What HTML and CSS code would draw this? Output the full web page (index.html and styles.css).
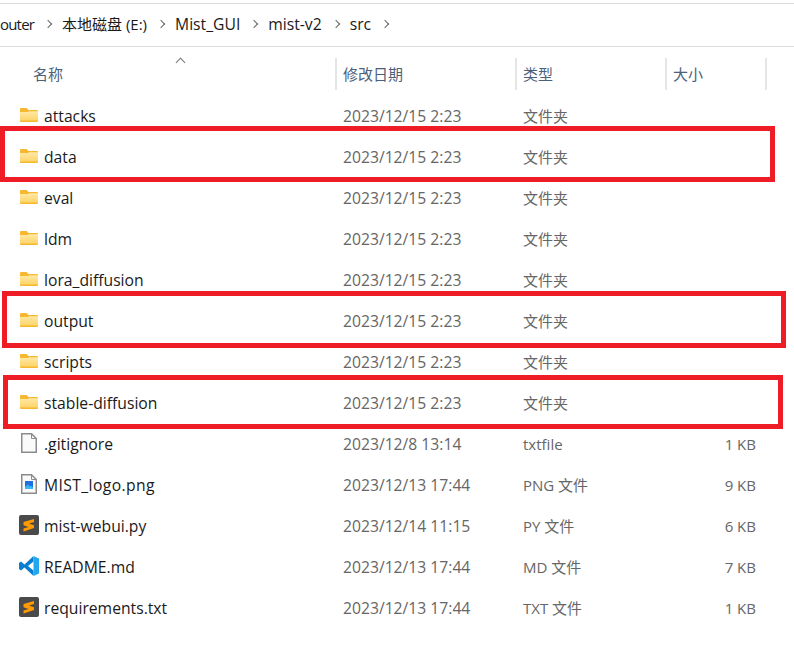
FILE: index.html
```html
<!DOCTYPE html>
<html lang="zh-CN">
<head>
    <meta charset="UTF-8">
    <title>src</title>
    <link rel="stylesheet" href="styles.css">
</head>
<body>
    <svg class="defs" width="0" height="0">
        <defs>
            <linearGradient id="folderFront" x1="0" y1="0" x2="0" y2="1">
                <stop offset="0" stop-color="#ffe9a6"/>
                <stop offset="1" stop-color="#fdd469"/>
            </linearGradient>
        </defs>
        <symbol id="folder" viewBox="0 0 18 14">
            <path d="M0 1Q0 0 1 0H6.5L8.5 2H17Q18 2 18 3V13Q18 14 17 14H1Q0 14 0 13Z" fill="#f5b82e"/>
            <path d="M0 4H8L9 3.2H18V12.6H0Z" fill="url(#folderFront)"/>
        </symbol>
        <symbol id="sublime" viewBox="0 0 20 20">
            <rect width="20" height="20" rx="2" fill="#4a4a4a"/>
            <path d="M4.5 7L15 4V7L10 8.6L15 10.2V13L4.5 16.5V13.5L9.5 11.9L4.5 10.3Z" fill="#ff9a00"/>
        </symbol>
    </svg>

    <div class="breadcrumb">
        <span class="crumb-cut">outer</span><i class="chev"></i>
        <span>本地磁盘 (E:)</span><i class="chev"></i>
        <span class="crumb">Mist_GUI</span><i class="chev"></i>
        <span class="crumb">mist-v2</span><i class="chev"></i>
        <span class="crumb">src</span><i class="chev"></i>
    </div>

    <div class="head">
        <div class="col-name">名称<i class="caret"></i></div>
        <div class="col-date">修改日期</div>
        <div class="col-type">类型</div>
        <div class="col-size">大小</div>
    </div>

    <div class="list">
        <div class="row"><svg class="ico-folder"><use href="#folder"/></svg><span class="name">attacks</span><span class="date">2023/12/15 2:23</span><span>文件夹</span></div>
        <div class="row"><svg class="ico-folder"><use href="#folder"/></svg><span class="name">data</span><span class="date">2023/12/15 2:23</span><span>文件夹</span></div>
        <div class="row"><svg class="ico-folder"><use href="#folder"/></svg><span class="name">eval</span><span class="date">2023/12/15 2:23</span><span>文件夹</span></div>
        <div class="row"><svg class="ico-folder"><use href="#folder"/></svg><span class="name">ldm</span><span class="date">2023/12/15 2:23</span><span>文件夹</span></div>
        <div class="row"><svg class="ico-folder"><use href="#folder"/></svg><span class="name">lora_diffusion</span><span class="date">2023/12/15 2:23</span><span>文件夹</span></div>
        <div class="row"><svg class="ico-folder"><use href="#folder"/></svg><span class="name">output</span><span class="date">2023/12/15 2:23</span><span>文件夹</span></div>
        <div class="row"><svg class="ico-folder"><use href="#folder"/></svg><span class="name">scripts</span><span class="date">2023/12/15 2:23</span><span>文件夹</span></div>
        <div class="row"><svg class="ico-folder"><use href="#folder"/></svg><span class="name">stable-diffusion</span><span class="date">2023/12/15 2:23</span><span>文件夹</span></div>
        <div class="row">
            <svg class="ico-file" viewBox="0 0 16 20"><path d="M.75.75H10.5L15.25 5.5V19.25H.75Z" fill="#fafafa" stroke="#8c8c8c" stroke-width="1.5"/><path d="M10.5 .75V5.5H15.25" fill="none" stroke="#8c8c8c"/></svg>
            <span class="name">.gitignore</span><span class="date">2023/12/8 13:14</span><span>txtfile</span><span class="size">1 KB</span>
        </div>
        <div class="row">
            <svg class="ico-file" viewBox="0 0 16 20"><path d="M.75.75H10.5L15.25 5.5V19.25H.75Z" fill="#fafafa" stroke="#8c8c8c" stroke-width="1.5"/><path d="M10.5 .75V5.5H15.25" fill="none" stroke="#8c8c8c"/><rect x="4" y="7" width="8" height="8" fill="#1f6fe0"/><path d="M4 15V13L7 10.5L9 12.5L10 11.5L12 13.5V15Z" fill="#35b8f5"/></svg>
            <span class="name name-caps">MIST_logo.png</span><span class="date">2023/12/13 17:44</span><span>PNG 文件</span><span class="size">9 KB</span>
        </div>
        <div class="row"><svg class="ico" viewBox="0 0 20 20"><use href="#sublime"/></svg><span class="name">mist-webui.py</span><span class="date">2023/12/14 11:15</span><span>PY 文件</span><span class="size">6 KB</span></div>
        <div class="row">
            <svg class="ico" viewBox="0 0 20 20"><path d="M14.5 0V5.6L9 10L14.5 14.4V20L5.5 11.6L2 14.4L0 13V7L2 5.6L5.5 8.4Z" fill="#0a7fd0"/><path d="M14.5 0L20 2.6V17.4L14.5 20Z" fill="#22a7f0"/></svg>
            <span class="name">README.md</span><span class="date">2023/12/13 17:44</span><span>MD 文件</span><span class="size">7 KB</span>
        </div>
        <div class="row"><svg class="ico" viewBox="0 0 20 20"><use href="#sublime"/></svg><span class="name">requirements.txt</span><span class="date">2023/12/13 17:44</span><span>TXT 文件</span><span class="size">1 KB</span></div>
    </div>

    <!-- red highlight boxes drawn over the listing -->
    <div class="mark mark-data"></div>
    <div class="mark mark-output"></div>
    <div class="mark mark-stable"></div>
</body>
</html>
```

FILE: styles.css
```css
body {
    margin: 0;
    background-color: #fff;
    font-family: "Open Sans", "Noto Sans CJK SC", sans-serif;
    font-size: 15px;
    color: #1a1a1a;
    position: relative;
    height: 650px;
    overflow: hidden;
}

.defs {
    position: absolute;
}

.breadcrumb {
    display: flex;
    align-items: center;
    box-sizing: border-box;
    height: 44px;
    margin-top: 3px;
    padding-bottom: 3px;
    border-top: 1px solid #dcdcdc;
    border-bottom: 1px solid #dcdcdc;
}

.crumb {
    font-size: 15.7px;
}

/* what is left of the first path segment, tight to the window edge */
.crumb-cut {
    letter-spacing: -0.8px;
    width: 34px;
    white-space: nowrap;
}

.chev {
    width: 5px;
    height: 5px;
    margin: 0 11px;
    border-top: 1px solid #666;
    border-right: 1px solid #666;
    transform: rotate(45deg);
}

.head,
.row {
    display: grid;
    grid-template-columns: 343px 180px 150px 90px;
}

.head {
    height: 48px;
    color: #4c607a;
}

.head > div {
    display: flex;
    align-items: center;
    padding-top: 4px;
    position: relative;
}

.col-name {
    padding-left: 33px;
}

.col-date::before,
.col-type::before,
.col-size::before,
.col-size::after {
    content: "";
    position: absolute;
    top: 11px;
    height: 32px;
    width: 2px;
    background-color: #e5e5e5;
}

.col-date::before,
.col-type::before,
.col-size::before {
    left: -8px;
}

.col-size::after {
    left: 92px;
}

.caret {
    position: absolute;
    left: 177px;
    top: 12px;
    width: 6px;
    height: 6px;
    border-top: 1px solid #777;
    border-left: 1px solid #777;
    transform: rotate(45deg);
}

.row {
    height: 41px;
    align-items: center;
    color: #666;
    position: relative;
}

.name {
    padding-left: 44px;
    color: #1a1a1a;
    font-size: 15.7px;
}

.name-caps {
    letter-spacing: 0.4px;
}

.date {
    font-size: 15.7px;
}

.ico,
.ico-file,
.ico-folder {
    position: absolute;
    top: 10px;
    left: 19px;
    width: 20px;
    height: 20px;
}

.ico-file {
    left: 21px;
    width: 16px;
}

.ico-folder {
    top: 13px;
    left: 20px;
    width: 18px;
    height: 14px;
}

.size {
    text-align: right;
    padding-right: 7px;
}

.mark {
    position: absolute;
    box-sizing: border-box;
    border: 5px solid #ee1c25;
}

.mark-data {
    left: 0;
    top: 126px;
    width: 775px;
    height: 56px;
}

.mark-output {
    left: 2px;
    top: 291px;
    width: 784px;
    height: 57px;
}

.mark-stable {
    left: 3px;
    top: 375px;
    width: 780px;
    height: 54px;
}
```
